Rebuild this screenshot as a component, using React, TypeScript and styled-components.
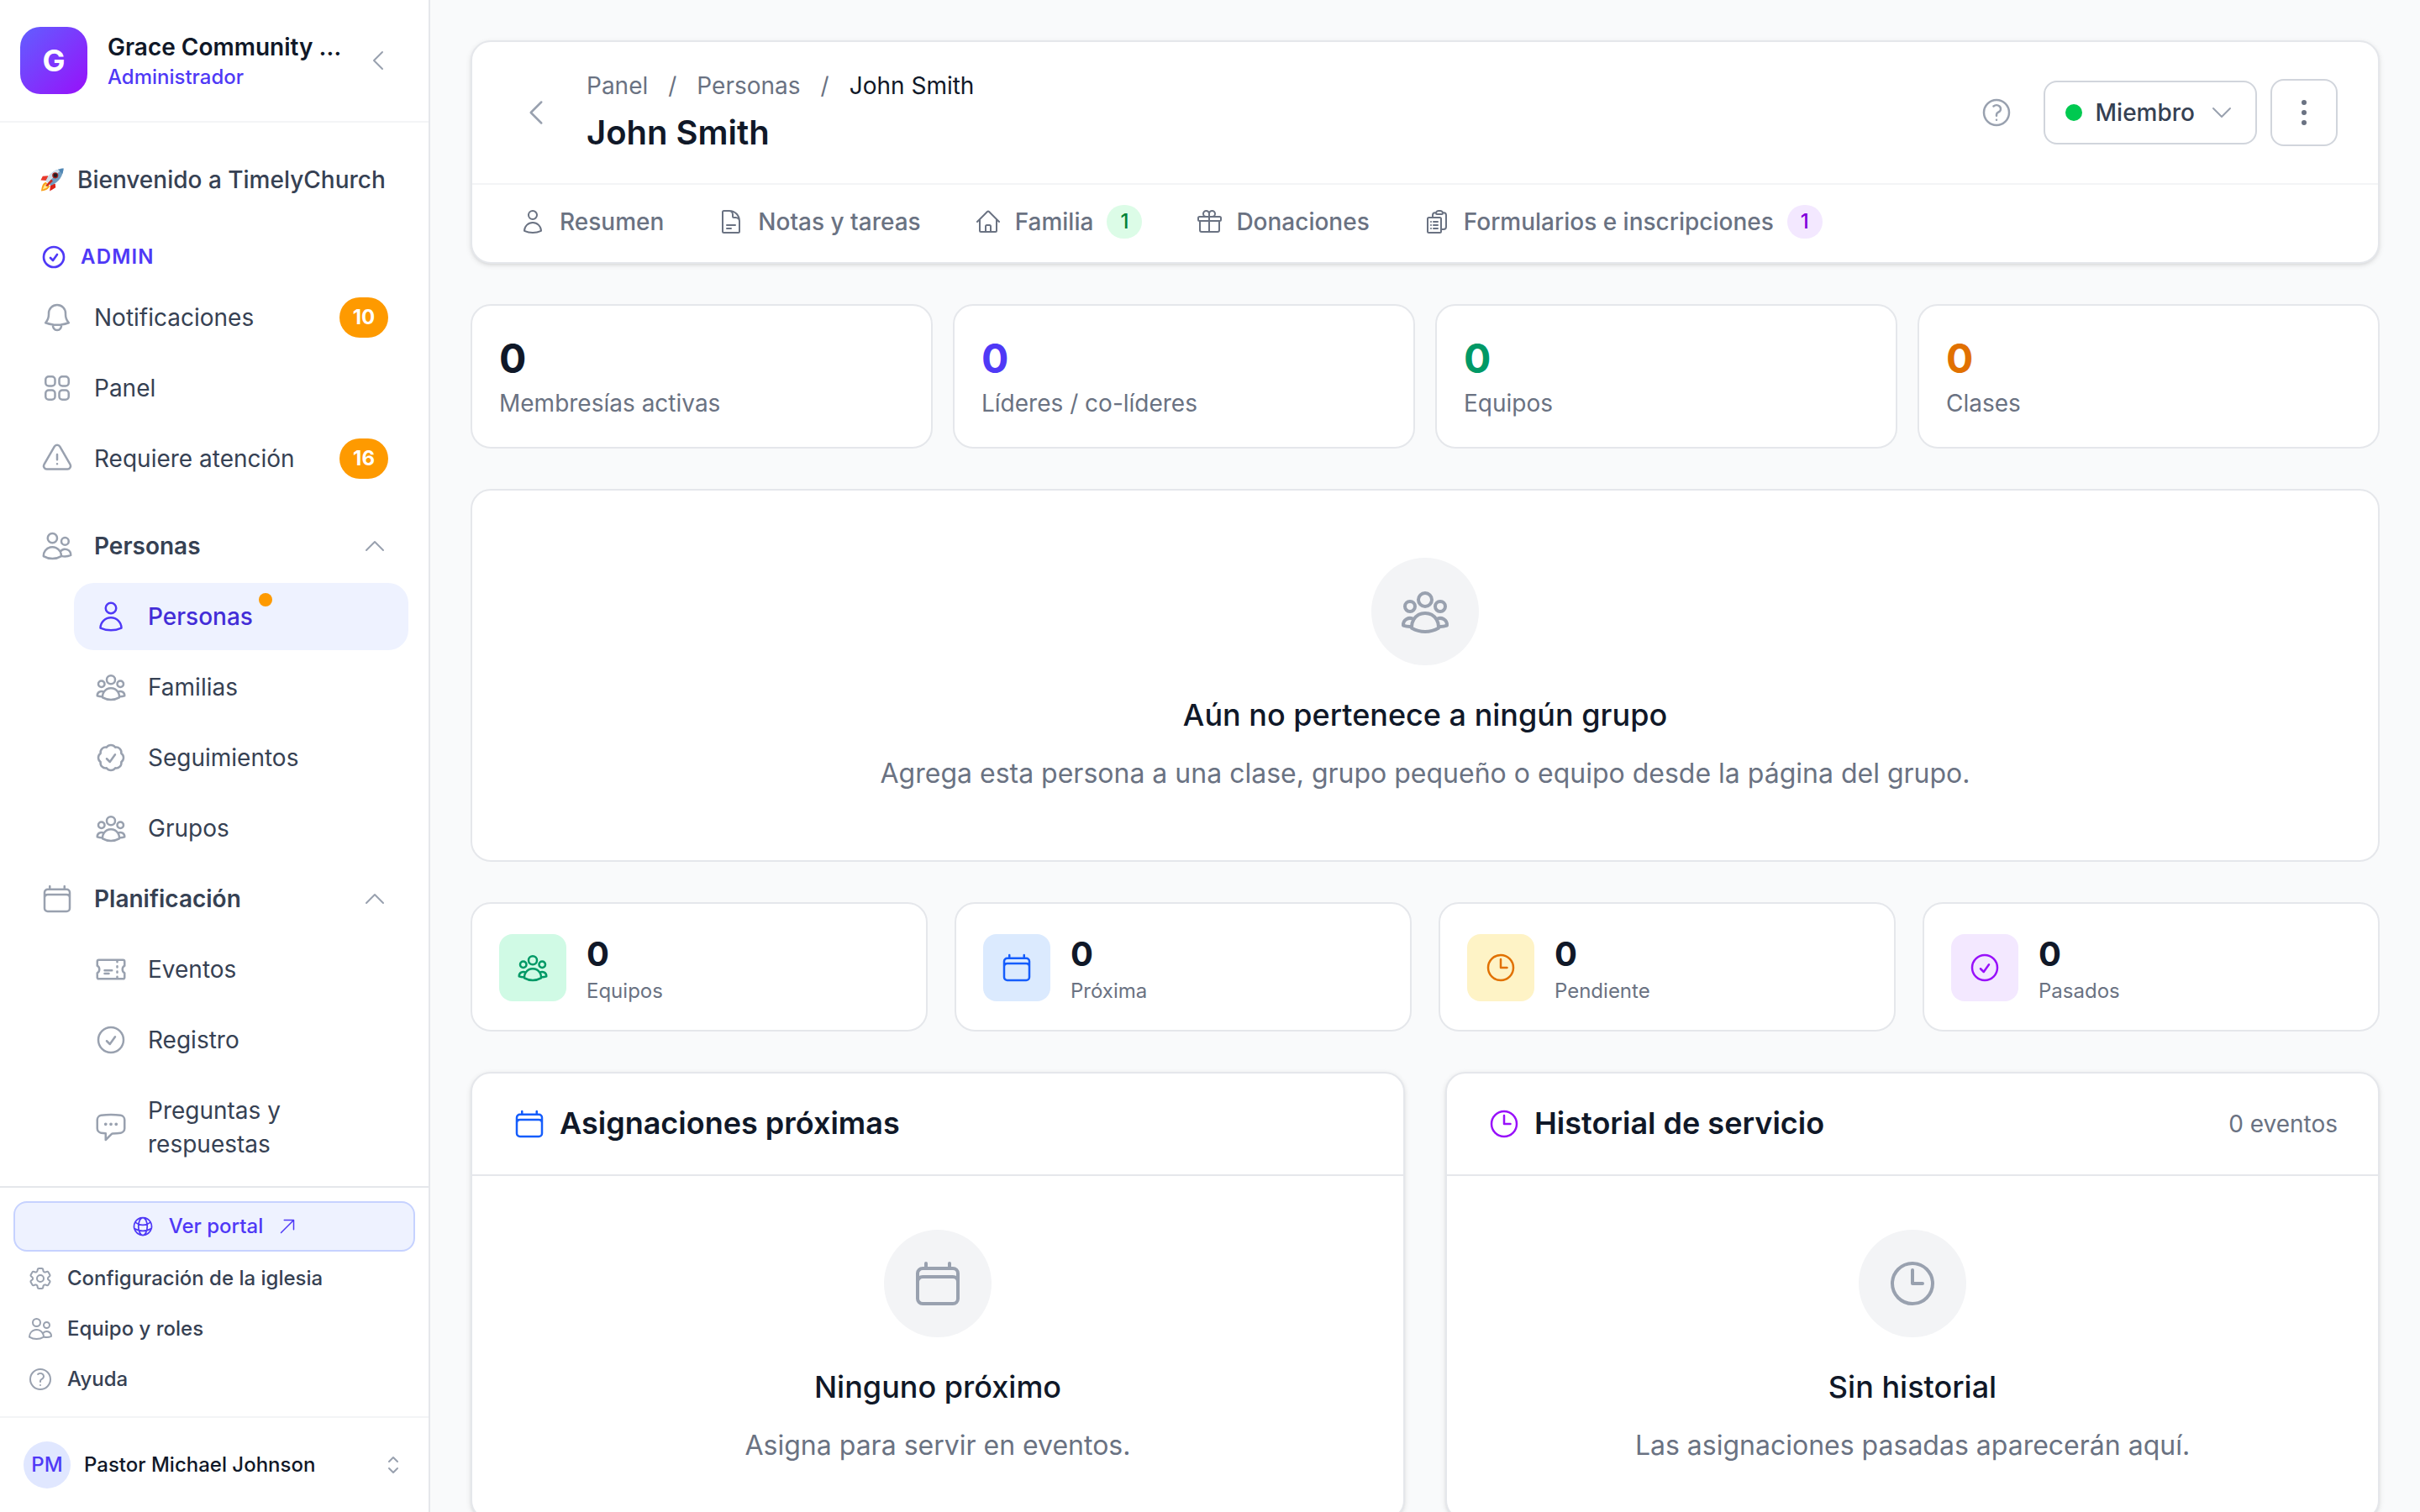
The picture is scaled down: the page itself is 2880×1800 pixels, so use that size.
import type { ComponentType, ReactNode } from 'react';
import styled, { createGlobalStyle } from 'styled-components';
import {
    HiOutlineArrowUpRight,
    HiOutlineBell,
    HiOutlineCalendar,
    HiOutlineChatBubbleLeftEllipsis,
    HiOutlineCheckBadge,
    HiOutlineCheckCircle,
    HiOutlineChevronDown,
    HiOutlineChevronLeft,
    HiOutlineChevronUp,
    HiOutlineChevronUpDown,
    HiOutlineClipboardDocumentList,
    HiOutlineClock,
    HiOutlineCog6Tooth,
    HiOutlineDocumentText,
    HiOutlineEllipsisVertical,
    HiOutlineExclamationTriangle,
    HiOutlineGift,
    HiOutlineGlobeAlt,
    HiOutlineHome,
    HiOutlineQuestionMarkCircle,
    HiOutlineSquares2X2,
    HiOutlineTicket,
    HiOutlineUser,
    HiOutlineUserGroup,
    HiOutlineUsers,
} from 'react-icons/hi2';

type IconType = ComponentType<{ size?: number | string }>;

const colors = {
    ink: '#101828',
    text: '#364153',
    muted: '#6a7282',
    icon: '#99a1af',
    line: '#e5e7eb',
    lineSoft: '#f3f4f6',
    lineStrong: '#d1d5dc',
    page: '#f9fafb',
    indigo: '#4f39f6',
    indigoDark: '#432dd7',
    indigoSoft: '#eef2ff',
    amber: '#fe9a00',
};

type NavItem = {
    label: string,
    icon: IconType,
    badge?: number,
    active?: boolean,
};

const adminItems: NavItem[] = [
    { label: 'Notificaciones', icon: HiOutlineBell, badge: 10 },
    { label: 'Panel', icon: HiOutlineSquares2X2 },
    { label: 'Requiere atención', icon: HiOutlineExclamationTriangle, badge: 16 },
];

const peopleItems: NavItem[] = [
    { label: 'Personas', icon: HiOutlineUser, active: true },
    { label: 'Familias', icon: HiOutlineUserGroup },
    { label: 'Seguimientos', icon: HiOutlineCheckBadge },
    { label: 'Grupos', icon: HiOutlineUserGroup },
];

const planningItems: NavItem[] = [
    { label: 'Eventos', icon: HiOutlineTicket },
    { label: 'Registro', icon: HiOutlineCheckCircle },
    { label: 'Preguntas y respuestas', icon: HiOutlineChatBubbleLeftEllipsis },
];

const footerItems: NavItem[] = [
    { label: 'Configuración de la iglesia', icon: HiOutlineCog6Tooth },
    { label: 'Equipo y roles', icon: HiOutlineUsers },
    { label: 'Ayuda', icon: HiOutlineQuestionMarkCircle },
];

const tabs = [
    { label: 'Resumen', icon: HiOutlineUser },
    { label: 'Notas y tareas', icon: HiOutlineDocumentText },
    { label: 'Familia', icon: HiOutlineHome, count: 1, bg: '#dcfce7', fg: '#008236' },
    { label: 'Donaciones', icon: HiOutlineGift },
    { label: 'Formularios e inscripciones', icon: HiOutlineClipboardDocumentList, count: 1, bg: '#f3e8ff', fg: '#8200db' },
];

const groupStats = [
    { label: 'Membresías activas', value: 0, color: colors.ink },
    { label: 'Líderes / co-líderes', value: 0, color: colors.indigo },
    { label: 'Equipos', value: 0, color: '#009966' },
    { label: 'Clases', value: 0, color: '#e17100' },
];

const serviceStats = [
    { label: 'Equipos', value: 0, icon: HiOutlineUserGroup, bg: '#d0fae5', fg: '#009966' },
    { label: 'Próxima', value: 0, icon: HiOutlineCalendar, bg: '#dbeafe', fg: '#155dfc' },
    { label: 'Pendiente', value: 0, icon: HiOutlineClock, bg: '#fef3c6', fg: '#e17100' },
    { label: 'Pasados', value: 0, icon: HiOutlineCheckCircle, bg: '#f3e8ff', fg: '#9810fa' },
];

const Rocket = () => (
    <svg width="28" height="28" viewBox="0 0 30 30">
        <path d="M10 10 L3 10.500 L0.500 15.500 L8 16Z" fill="#e8392c" />
        <path d="M19 20 L19.500 25 L12 29.500 L13 21Z" fill="#dd2418" />
        <path d="M7 18 C2 20 2 25 1 29.500 C6 28.500 10 28 12 23Z" fill="#f9a11b" />
        <path d="M8 20 C5 21 4 24 3 27.500 C6 26 8 26 10 23Z" fill="#ffe98a" />
        <path d="M29.500 0.500 C20 1 12 6 7 16 L13.500 22.500 C24 18 29 10 29.500 0.500Z" fill="#6e9cc0" />
        <path d="M29.500 0.500 C20 1 12 6 7 16 L10 19 C15 13 22 6 29.500 0.500Z" fill="#cfe0ea" />
        <path d="M29.500 0.500 C27 0.600 25 1.200 22.600 2 L28 7.400 C29 5 29.400 3 29.500 0.500Z" fill="#4f86b4" />
        <circle cx="19" cy="9.500" r="3.800" fill="#a81f1a" />
        <circle cx="19.200" cy="9.300" r="2.500" fill="#1f1d24" />
        <path d="M14 14.500 L6.500 22.500 L9 23.500 L16 16.500Z" fill="#d3281e" />
    </svg>
);

const NavLink = ({ item, nested }: { item: NavItem, nested?: boolean }) => {
    const Icon = item.icon;
    return (
        <NavRow $nested={nested} $active={item.active}>
            <Icon size={40} />
            <NavLabel>
                {item.label}
                {item.active && <Dot />}
            </NavLabel>
            {item.badge && <CountBadge>{item.badge}</CountBadge>}
        </NavRow>
    );
};

const NavGroup = ({ label, icon: Icon, items }: { label: string, icon: IconType, items: NavItem[] }) => (
    <>
        <NavRow $heading>
            <Icon size={40} />
            <NavLabel>{label}</NavLabel>
            <GroupToggle><HiOutlineChevronUp size={32} /></GroupToggle>
        </NavRow>
        {items.map(item => <NavLink key={item.label} item={item} nested />)}
    </>
);

const EmptyState = ({ icon: Icon, title, children }: { icon: IconType, title: string, children: ReactNode }) => (
    <Empty>
        <EmptyIcon><Icon size={64} /></EmptyIcon>
        <EmptyTitle>{title}</EmptyTitle>
        <EmptyText>{children}</EmptyText>
    </Empty>
);

const Sidebar = () => (
    <Aside>
        <ChurchHeader>
            <ChurchLogo>G</ChurchLogo>
            <ChurchInfo>
                <ChurchName>Grace Community …</ChurchName>
                <ChurchRole>Administrador</ChurchRole>
            </ChurchInfo>
            <HiOutlineChevronLeft size={32} />
        </ChurchHeader>
        <Nav>
            <Welcome><Rocket />Bienvenido a TimelyChurch</Welcome>
            <SectionTitle><HiOutlineCheckCircle size={32} />ADMIN</SectionTitle>
            <NavSection>
                {adminItems.map(item => <NavLink key={item.label} item={item} />)}
            </NavSection>
            <NavSection>
                <NavGroup label="Personas" icon={HiOutlineUsers} items={peopleItems} />
                <NavGroup label="Planificación" icon={HiOutlineCalendar} items={planningItems} />
            </NavSection>
        </Nav>
        <AsideFooter>
            <PortalButton>
                <HiOutlineGlobeAlt size={28} />
                Ver portal
                <HiOutlineArrowUpRight size={24} />
            </PortalButton>
            {footerItems.map(({ label, icon: Icon }) => (
                <FooterLink key={label}><Icon size={32} /><span>{label}</span></FooterLink>
            ))}
        </AsideFooter>
        <Account>
            <Avatar>PM</Avatar>
            <AccountName>Pastor Michael Johnson</AccountName>
            <HiOutlineChevronUpDown size={32} />
        </Account>
    </Aside>
);

const ProfileHeader = () => (
    <Card $shadow>
        <HeaderTop>
            <BackButton><HiOutlineChevronLeft size={40} /></BackButton>
            <HeaderTitles>
                <Breadcrumb>
                    <span>Panel</span>
                    <span>/</span>
                    <span>Personas</span>
                    <span>/</span>
                    <Current>John Smith</Current>
                </Breadcrumb>
                <PageTitle>John Smith</PageTitle>
            </HeaderTitles>
            <HelpButton><HiOutlineQuestionMarkCircle size={40} /></HelpButton>
            <StatusButton>
                <StatusDot />
                Miembro
                <HiOutlineChevronDown size={32} />
            </StatusButton>
            <MenuButton><HiOutlineEllipsisVertical size={48} /></MenuButton>
        </HeaderTop>
        <TabBar>
            {tabs.map(({ label, icon: Icon, count, bg, fg }) => (
                <Tab key={label}>
                    <Icon size={32} />
                    {label}
                    {count && <TabCount $bg={bg} $fg={fg}>{count}</TabCount>}
                </Tab>
            ))}
        </TabBar>
    </Card>
);

const App = () => (
    <>
        <GlobalStyle />
        <Layout>
            <Sidebar />
            <Main>
                <ProfileHeader />
                <StatGrid $gap={24}>
                    {groupStats.map(({ label, value, color }) => (
                        <StatCard key={label}>
                            <StatValue $color={color}>{value}</StatValue>
                            <StatLabel>{label}</StatLabel>
                        </StatCard>
                    ))}
                </StatGrid>
                <EmptyCard>
                    <EmptyState icon={HiOutlineUserGroup} title="Aún no pertenece a ningún grupo">
                        Agrega esta persona a una clase, grupo pequeño o equipo desde la página del grupo.
                    </EmptyState>
                </EmptyCard>
                <StatGrid $gap={32}>
                    {serviceStats.map(({ label, value, icon: Icon, bg, fg }) => (
                        <IconStat key={label}>
                            <IconTile $bg={bg} $fg={fg}><Icon size={40} /></IconTile>
                            <div>
                                <SmallValue>{value}</SmallValue>
                                <SmallLabel>{label}</SmallLabel>
                            </div>
                        </IconStat>
                    ))}
                </StatGrid>
                <PanelGrid>
                    <Card $shadow>
                        <PanelHeader $icon="#155dfc">
                            <HiOutlineCalendar size={40} />
                            <PanelTitle>Asignaciones próximas</PanelTitle>
                        </PanelHeader>
                        <PanelBody>
                            <EmptyState icon={HiOutlineCalendar} title="Ninguno próximo">
                                Asigna para servir en eventos.
                            </EmptyState>
                        </PanelBody>
                    </Card>
                    <Card $shadow>
                        <PanelHeader $icon="#9810fa">
                            <HiOutlineClock size={40} />
                            <PanelTitle>Historial de servicio</PanelTitle>
                            <PanelNote>0 eventos</PanelNote>
                        </PanelHeader>
                        <PanelBody>
                            <EmptyState icon={HiOutlineClock} title="Sin historial">
                                Las asignaciones pasadas aparecerán aquí.
                            </EmptyState>
                        </PanelBody>
                    </Card>
                </PanelGrid>
            </Main>
        </Layout>
    </>
);

const GlobalStyle = createGlobalStyle`
    *, *::before, *::after {
        box-sizing: border-box;
    }

    body {
        margin: 0;
        overflow: hidden;
        background: ${colors.page};
        color: ${colors.ink};
        font-family: Inter, "Liberation Sans", sans-serif;
        font-size: 30px;
        line-height: 40px;
        -webkit-font-smoothing: antialiased;
    }

    h1, h2, h3, p {
        margin: 0;
    }

    svg {
        flex-shrink: 0;
        display: block;
    }
`;

const Layout = styled.div`
    display: flex;
    width: 2880px;
    height: 1800px;
    overflow: hidden;
`;

const Aside = styled.aside`
    display: flex;
    flex-direction: column;
    flex-shrink: 0;
    width: 512px;
    height: 100%;
    background: #fff;
    border-right: 2px solid ${colors.line};
`;

const ChurchHeader = styled.div`
    display: flex;
    align-items: center;
    flex-shrink: 0;
    height: 146px;
    padding: 0 44px 0 24px;
    border-bottom: 2px solid ${colors.lineSoft};
    color: ${colors.icon};
`;

const ChurchLogo = styled.div`
    display: flex;
    align-items: center;
    justify-content: center;
    width: 80px;
    height: 80px;
    border-radius: 24px;
    background: linear-gradient(135deg, #615fff, #9810fa);
    color: #fff;
    font-size: 36px;
    font-weight: 700;
`;

const ChurchInfo = styled.div`
    flex: 1;
    min-width: 0;
    margin: 0 24px;
    padding-top: 2px;
`;

const ChurchName = styled.div`
    white-space: nowrap;
    color: ${colors.ink};
    font-size: 28px;
    font-weight: 600;
    line-height: 38px;
`;

const ChurchRole = styled.div`
    color: ${colors.indigo};
    font-size: 24px;
    font-weight: 500;
    line-height: 34px;
`;

const Nav = styled.nav`
    flex: 1;
    min-height: 0;
    overflow: hidden;
    padding: 28px 24px 0;
`;

const Welcome = styled.div`
    display: flex;
    align-items: center;
    gap: 16px;
    height: 80px;
    padding: 0 24px;
    color: ${colors.text};
    font-size: 28px;
    font-weight: 500;
`;

const SectionTitle = styled.div`
    display: flex;
    align-items: center;
    gap: 16px;
    height: 36px;
    margin: 34px 0 14px;
    padding: 0 24px;
    color: ${colors.indigo};
    font-size: 24px;
    font-weight: 600;
    letter-spacing: 1.2px;

    svg {
        stroke-width: 2;
    }
`;

const NavSection = styled.div`
    display: flex;
    flex-direction: column;
    gap: 4px;

    & + & {
        margin-top: 24px;
    }
`;

const NavRow = styled.div<{ $nested?: boolean, $active?: boolean, $heading?: boolean }>`
    display: flex;
    align-items: center;
    gap: 24px;
    margin-left: ${props => (props.$nested ? '64px' : '0')};
    padding: 20px 24px;
    border-radius: 24px;
    background: ${props => (props.$active ? colors.indigoSoft : 'transparent')};
    color: ${props => (props.$active ? colors.indigoDark : colors.text)};
    font-size: 28px;
    font-weight: ${props => (props.$heading ? 600 : props.$active ? 500 : 400)};

    > svg {
        color: ${props => (props.$active ? colors.indigo : colors.icon)};
    }
`;

const NavLabel = styled.span`
    position: relative;
    max-width: 250px;
`;

const Dot = styled.i`
    position: absolute;
    top: -8px;
    right: -23px;
    width: 16px;
    height: 16px;
    border-radius: 50%;
    background: ${colors.amber};
`;

const CountBadge = styled.span`
    display: flex;
    align-items: center;
    justify-content: center;
    height: 48px;
    min-width: 58px;
    margin: -4px 0 -4px auto;
    border-radius: 24px;
    background: ${colors.amber};
    color: #fff;
    font-size: 24px;
    font-weight: 700;
`;

const GroupToggle = styled.span`
    margin-left: auto;
    color: ${colors.icon};
`;

const AsideFooter = styled.div`
    flex-shrink: 0;
    height: 274px;
    padding: 16px;
    border-top: 2px solid ${colors.line};
`;

const PortalButton = styled.div`
    display: flex;
    align-items: center;
    justify-content: center;
    gap: 17px;
    height: 60px;
    margin-bottom: 2px;
    border: 2px solid #c6d2ff;
    border-radius: 16px;
    background: ${colors.indigoSoft};
    color: ${colors.indigo};
    font-size: 24px;
    font-weight: 500;
`;

const FooterLink = styled.div`
    display: flex;
    align-items: center;
    gap: 16px;
    height: 60px;
    padding: 0 16px;
    color: ${colors.icon};
    font-size: 24px;
    font-weight: 500;

    span {
        color: ${colors.text};
    }
`;

const Account = styled.div`
    display: flex;
    align-items: center;
    flex-shrink: 0;
    gap: 16px;
    height: 114px;
    padding: 0 26px 0 28px;
    border-top: 2px solid ${colors.lineSoft};
    color: ${colors.icon};
`;

const Avatar = styled.div`
    display: flex;
    align-items: center;
    justify-content: center;
    width: 56px;
    height: 56px;
    border-radius: 50%;
    background: #e0e7ff;
    color: ${colors.indigo};
    font-size: 24px;
    font-weight: 500;
`;

const AccountName = styled.div`
    flex: 1;
    color: ${colors.ink};
    font-size: 24px;
    font-weight: 500;
`;

const Main = styled.main`
    display: flex;
    flex-direction: column;
    flex: 1;
    gap: 48px;
    padding: 48px;

    > * {
        flex-shrink: 0;
    }
`;

const Card = styled.section<{ $shadow?: boolean }>`
    border: 2px solid ${colors.line};
    border-radius: 24px;
    background: #fff;
    box-shadow: ${props => (props.$shadow ? '0 2px 6px rgba(0, 0, 0, 0.1), 0 2px 4px -2px rgba(0, 0, 0, 0.1)' : 'none')};
`;

const HeaderTop = styled.div`
    display: flex;
    align-items: center;
    height: 170px;
    padding: 0 48px;
    border-bottom: 2px solid ${colors.lineSoft};
`;

const BackButton = styled.div`
    padding: 8px;
    color: ${colors.icon};
`;

const HeaderTitles = styled.div`
    flex: 1;
    margin-left: 32px;
`;

const Breadcrumb = styled.div`
    display: flex;
    gap: 24px;
    color: ${colors.muted};
    font-size: 28px;
`;

const Current = styled.span`
    color: ${colors.ink};
`;

const PageTitle = styled.h1`
    margin-top: 8px;
    font-size: 40px;
    font-weight: 600;
    line-height: 56px;
`;

const HelpButton = styled.div`
    padding: 20px;
    margin-right: 16px;
    color: ${colors.icon};
`;

const StatusButton = styled.div`
    display: flex;
    align-items: center;
    gap: 16px;
    height: 76px;
    margin-right: 16px;
    padding: 0 24px;
    border: 2px solid ${colors.lineStrong};
    border-radius: 16px;
    color: ${colors.text};
    font-size: 28px;
    font-weight: 500;

    svg {
        color: ${colors.icon};
    }
`;

const StatusDot = styled.span`
    width: 20px;
    height: 20px;
    border-radius: 50%;
    background: #00c950;
`;

const MenuButton = styled.div`
    display: flex;
    align-items: center;
    justify-content: center;
    width: 80px;
    height: 80px;
    border: 2px solid ${colors.lineStrong};
    border-radius: 16px;
    color: ${colors.muted};
`;

const TabBar = styled.div`
    display: flex;
    align-items: center;
    gap: 64px;
    height: 92px;
    padding: 0 56px 4px;
`;

const Tab = styled.div`
    display: flex;
    align-items: center;
    gap: 16px;
    color: ${colors.muted};
    font-size: 28px;
    font-weight: 500;
`;

const TabCount = styled.span<{ $bg?: string, $fg?: string }>`
    min-width: 42px;
    border-radius: 20px;
    background: ${props => props.$bg};
    color: ${props => props.$fg};
    font-size: 24px;
    text-align: center;
`;

const StatGrid = styled.div<{ $gap: number }>`
    display: grid;
    grid-template-columns: repeat(4, 1fr);
    gap: ${props => props.$gap}px;
`;

const StatCard = styled(Card)`
    height: 172px;
    padding: 32px;
`;

const StatValue = styled.div<{ $color: string }>`
    margin-bottom: 2px;
    color: ${props => props.$color};
    font-size: 48px;
    font-weight: 700;
    line-height: 62px;
`;

const StatLabel = styled.div`
    color: ${colors.muted};
    font-size: 28px;
`;

const EmptyCard = styled(Card)`
    padding: 80px;
`;

const Empty = styled.div`
    display: flex;
    flex-direction: column;
    align-items: center;
`;

const EmptyIcon = styled.div`
    display: flex;
    align-items: center;
    justify-content: center;
    width: 128px;
    height: 128px;
    margin-bottom: 32px;
    border-radius: 50%;
    background: ${colors.lineSoft};
    color: ${colors.icon};
`;

const EmptyTitle = styled.h3`
    font-size: 36px;
    font-weight: 500;
    line-height: 54px;
`;

const EmptyText = styled.p`
    margin-top: 20px;
    color: ${colors.muted};
    font-size: 32px;
    line-height: 46px;
`;

const IconStat = styled(Card)`
    display: flex;
    align-items: center;
    gap: 24px;
    height: 154px;
    padding: 2px 32px 0;
`;

const IconTile = styled.div<{ $bg: string, $fg: string }>`
    display: flex;
    align-items: center;
    justify-content: center;
    width: 80px;
    height: 80px;
    border-radius: 16px;
    background: ${props => props.$bg};
    color: ${props => props.$fg};
`;

const SmallValue = styled.div`
    font-size: 40px;
    font-weight: 700;
    line-height: 54px;
`;

const SmallLabel = styled.div`
    margin-top: 2px;
    color: ${colors.muted};
    font-size: 24px;
    line-height: 30px;
`;

const PanelGrid = styled.div`
    display: grid;
    grid-template-columns: 1fr 1fr;
    gap: 48px;
`;

const PanelHeader = styled.div<{ $icon: string }>`
    display: flex;
    align-items: center;
    gap: 16px;
    height: 122px;
    padding: 0 48px;
    border-bottom: 2px solid ${colors.line};
    color: ${props => props.$icon};
`;

const PanelTitle = styled.h2`
    padding-bottom: 2px;
    color: ${colors.ink};
    font-size: 36px;
    font-weight: 600;
`;

const PanelNote = styled.span`
    margin-left: auto;
    color: ${colors.muted};
    font-size: 28px;
`;

const PanelBody = styled.div`
    padding: 64px;
`;

export default App;
